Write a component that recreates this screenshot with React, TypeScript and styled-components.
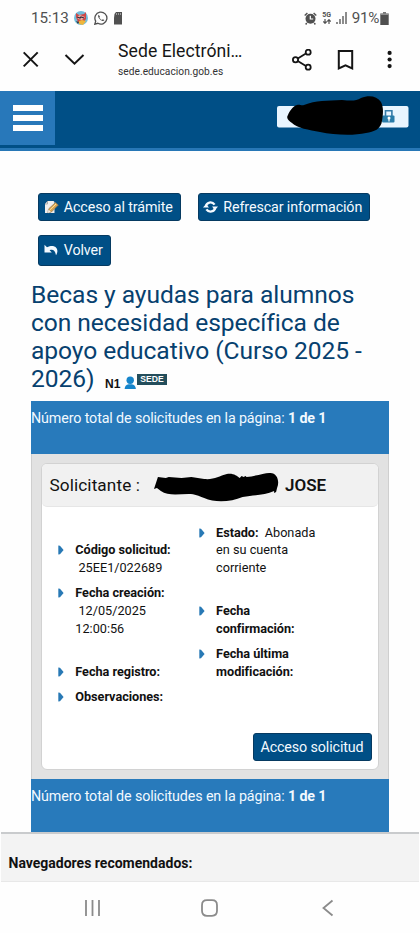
import React from "react";
import styled, { createGlobalStyle } from "styled-components";

const GlobalStyle = createGlobalStyle`
  * { box-sizing: border-box; }
  body { margin: 0; background: #fefefe; font-family: Roboto, sans-serif; color: #111; }
`;

const Screen = styled.div`
  width: 420px;
  height: 933px;
  display: flex;
  flex-direction: column;
  overflow: hidden;
`;

const StatusBar = styled.div`
  height: 36px;
  padding: 0 31px 0 31px;
  display: flex;
  align-items: center;
  justify-content: space-between;
  color: #505050;
  font-size: 15.2px;
`;

const StatusGroup = styled.div<{ $gap: number }>`
  display: flex;
  align-items: center;
  gap: ${(p) => p.$gap}px;
  svg { display: block; }
`;

const StatusText = styled.span<{ $spacing: number }>`
  letter-spacing: ${(p) => p.$spacing}px;
  line-height: 20px;
`;

const BrowserBar = styled.div`
  height: 55px;
  display: flex;
  align-items: flex-start;
  padding-left: 22px;
  svg { display: block; flex: none; }
`;

const BrowserIcons = styled.div<{ $width: number }>`
  width: ${(p) => p.$width}px;
  padding-top: 13px;
  display: flex;
  flex: none;
`;

const PageInfo = styled.div`
  width: 171px;
  flex: none;
  padding-top: 4px;
  white-space: nowrap;
`;

const PageTitle = styled.div`
  font-size: 17.6px;
  line-height: 23px;
  letter-spacing: 0.06px;
  color: #161616;
`;

const PageUrl = styled.div`
  margin-top: 2px;
  font-size: 10.2px;
  line-height: 13px;
  letter-spacing: 0.03px;
  color: #333;
`;

const SiteHeader = styled.header`
  height: 60px;
  flex: none;
  background: #004f86;
  border-bottom: 3px solid #2777b6;
  display: flex;
  justify-content: space-between;
`;

const MenuButton = styled.button`
  width: 54.5px;
  height: 53.5px;
  padding: 13.5px 11.5px 13px 12.5px;
  border: 0;
  background: #2878ba;
  display: flex;
  flex-direction: column;
  justify-content: space-between;
`;

const MenuLine = styled.span`
  height: 6.4px;
  width: 30.5px;
  background: #fff;
`;

const UserBadge = styled.div`
  width: 148px;
  height: 57px;
  svg { display: block; }
`;

const Main = styled.main`
  height: 681px;
  flex: none;
  padding: 42px 31px 0;
`;

const Actions = styled.div`
  display: flex;
  flex-wrap: wrap;
  gap: 13.5px 17px;
  padding-left: 7px;
`;

const Button = styled.button<{ $width: number; $height?: number }>`
  width: ${(p) => p.$width}px;
  height: ${(p) => p.$height ?? 28}px;
  padding: 0;
  border: 1px solid #063a61;
  border-radius: 3px;
  background: #004f86;
  color: #f4faff;
  font: 14.3px/20px Roboto, sans-serif;
  letter-spacing: -0.12px;
  display: flex;
  align-items: center;
  justify-content: center;
  gap: 5px;
  white-space: nowrap;
  svg { flex: none; margin-left: -2px; }
`;

const Heading = styled.h1`
  margin: 15px 0 0;
  height: 120.5px;
  font-size: 24.6px;
  line-height: 28.3px;
  font-weight: 400;
  letter-spacing: -0.06px;
  color: #07416f;
  white-space: nowrap;
`;

const Level = styled.span`
  display: inline-flex;
  align-items: center;
  margin-left: 10.5px;
  height: 16px;
  vertical-align: -1px;
  letter-spacing: 0;
`;

const LevelCode = styled.span`
  font: bold 12px/16px "Liberation Sans", sans-serif;
  color: #111;
  margin-top: 3px;
  width: 19px;
`;

const SedeTag = styled.span`
  width: 30px;
  height: 11px;
  margin-bottom: 6px;
  background: #244e5c;
  color: #fff;
  font: bold 8.6px/11px "Liberation Sans", sans-serif;
  text-align: center;
`;

const CountBar = styled.div`
  height: 52.5px;
  padding-top: 6.5px;
  background: #287abb;
  color: #f2f9ff;
  font-size: 14.3px;
  line-height: 20px;
  letter-spacing: -0.13px;
  white-space: nowrap;
`;

const Panel = styled.section`
  height: 325.5px;
  padding: 9px 9px 9px 8.5px;
  background: #e2e2e2;
  border: solid #cfcfcf;
  border-width: 0 1px;
`;

const Card = styled.article`
  height: 307px;
  background: #fff;
  border: 1px solid #d2d2d2;
  border-radius: 6px;
`;

const CardHeader = styled.header`
  height: 43px;
  padding-left: 8px;
  background: #f1f1f1;
  border-bottom: 1px solid #e6e6e6;
  border-radius: 5px;
  display: flex;
  align-items: center;
  font-size: 17.2px;
  letter-spacing: 0.1px;
  svg { display: block; flex: none; margin: 5px 4px 0 11.5px; }
`;

const ApplicantLabel = styled.span`
  width: 92px;
  white-space: nowrap;
`;

const ApplicantName = styled.strong`
  font-weight: 600;
  font-size: 17px;
  letter-spacing: 0;
`;

const Details = styled.div`
  height: 198px;
  padding: 17.4px 0 0 16.8px;
  display: grid;
  grid-template-columns: 140.8px 150px;
  grid-template-rows: repeat(4, max-content);
  align-items: end;
  row-gap: 7.8px;
`;

const Detail = styled.div`
  display: flex;
  font-size: 12.7px;
  line-height: 17.6px;
  white-space: pre;
  svg { flex: none; margin: 4px 11px 0 0; }
`;

const Term = styled.strong`
  font-weight: 700;
  letter-spacing: -0.04px;
`;

const Value = styled.span`
  letter-spacing: 0;
`;

const CardActions = styled.div`
  height: 62px;
  padding: 28.6px 6.5px 0 0;
  display: flex;
  justify-content: flex-end;
`;

const Footer = styled.footer`
  height: 49.5px;
  flex: none;
  margin: 0 1px;
  padding: 17.5px 7.5px 0;
  background: #f3f3f3;
  border-top: 2px solid #c9cbcd;
  border-bottom: 1px solid #e8e8e8;
  font-size: 14px;
  line-height: 22px;
  font-weight: 700;
`;

const SystemNav = styled.nav`
  flex: 1;
  padding: 15.5px 82px 0 82.5px;
  display: flex;
  justify-content: space-between;
`;

const AppAvatar = () => (
  <svg width="14" height="14" viewBox="0 0 14 14">
    <circle cx="7" cy="7" r="7" fill="#71bddb" />
    <path d="M2 6 2 2l3 2 5-1 2-2 0 7-3 4-5-1z" fill="#cf4848" />
    <path d="m3 6 3-2 5 2-3 3-4-1z" fill="#efb1a6" />
    <path d="m3 6 3 1 1-1 3 1" stroke="#352b3d" strokeWidth="1.3" fill="none" />
    <path d="m5 10 3-1 4 1-3 4-4-1z" fill="#f0b73b" />
    <path d="m2 10 3 1-1 2" fill="#333" />
  </svg>
);

const WhatsApp = () => (
  <svg width="14" height="14" viewBox="0 0 14 14" fill="none" stroke="#505050" strokeWidth="1.3">
    <path d="m.8 13.2.9-3.1a6 6 0 1 1 2.2 2.2z" />
    <path d="M4.7 3.7c-1.4 1.2-.3 3.2 1.4 4.8s3.5 2.2 4.3.6L8.8 8.2l-.9.8C6.7 8.4 6 7.7 5.4 6.5l.6-.8z" fill="#505050" stroke="none" />
  </svg>
);

const StorageCard = () => (
  <svg width="10" height="13" viewBox="0 0 9 13">
    <path d="M2.5 0H8.5V12.5H.5V6L1 2z" fill="#505050" />
    <path d="M3 1v2M5 1v2M7 1v2" stroke="#bbb" strokeWidth=".7" />
  </svg>
);

const Alarm = () => (
  <svg width="13" height="13" viewBox="0 0 13 13" fill="none">
    <circle cx="6.5" cy="6.8" r="5" fill="#505050" />
    <path d="M.7 3.4 3.4.9M12.3 3.4 9.6.9M2.7 11l-1 1.5M10.3 11l1 1.5" stroke="#505050" strokeWidth="1.4" />
    <path d="M6.3 3.8V7h2.9" stroke="#fff" strokeWidth="1.2" />
  </svg>
);

const NetworkLabel = styled.div`
  width: 10px;
  display: flex;
  flex-direction: column;
  align-items: center;
  gap: 1px;
  font: 700 7px/6px Roboto, sans-serif;
`;

const Network = () => (
  <NetworkLabel>
    <span>5G</span>
    <svg width="8" height="5" viewBox="0 0 8 5" stroke="#505050" fill="none" strokeWidth="1.2">
      <path d="M2 0v4M.3 2.5 2 4.3 3.7 2.5M6 5V1M4.3 2.5 6 .7l1.7 1.8" />
    </svg>
  </NetworkLabel>
);

const Signal = () => (
  <svg width="11" height="12" viewBox="0 0 11 12" stroke="#707070" strokeWidth="1.6">
    <path d="M1 10v2M4 7v5M7 4v8M10 0v12" />
  </svg>
);

const Battery = () => (
  <svg width="9" height="13" viewBox="0 0 9 13">
    <path d="M3 0h3v1.5h2.7V13H.3V1.5H3z" fill="#505050" />
    <path d="M3 1h3M.5 2.3h8" stroke="#aaa" strokeWidth=".9" />
  </svg>
);

const CloseAndExpand = () => (
  <svg width="66" height="22" viewBox="0 0 66 22" fill="none" stroke="#151515" strokeWidth="2">
    <path d="m1.7 3.4 14 14M15.7 3.4l-14 14" />
    <path d="m43.5 6 9 8.7 9-8.7" />
  </svg>
);

const BrowserTools = () => (
  <svg width="114" height="24" viewBox="0 0 114 24" fill="none" stroke="#151515" strokeWidth="1.8">
    <path d="m8.8 9.6 8.1-5M8.8 11.9l8.1 5.1" />
    <circle cx="6.5" cy="10.7" r="2.6" />
    <circle cx="19.2" cy="3.2" r="2.5" />
    <circle cx="19.2" cy="18.2" r="2.5" />
    <path d="M49.8 2h13.4v17.4l-6.7-3-6.7 3z" strokeWidth="2" />
    <g fill="#151515" stroke="none">
      <circle cx="100.6" cy="3.9" r="2.1" />
      <circle cx="100.6" cy="10.5" r="2.1" />
      <circle cx="100.6" cy="17.1" r="2.1" />
    </g>
  </svg>
);

const UserScribble = () => (
  <svg width="148" height="57" viewBox="0 0 148 57">
    <rect x="5" y="15" width="131.5" height="21.5" rx="2" fill="#e9f5ff" />
    <path d="M113.5 25v-5.3h6.4V25" fill="none" stroke="#347ba9" strokeWidth="1.6" />
    <rect x="110" y="24.5" width="12.5" height="7" rx="1" fill="#287ba9" />
    <circle cx="117" cy="27" r="1.5" fill="#fff" />
    <path d="M117 27v3.4" stroke="#fff" strokeWidth="1.2" />
    <path d="M16 24c1-3 5-9 9-10 3-1 4 1 7 0 12-5 23-4 38-5 10 1 14 1 19-2 8-3 16-2 20 4 3 6 2 13 1 19-1 8-8 11-16 12-13 3-32 2-46-1-11-2-23-4-28-9-4-3-6-5-4-8z" fill="#000" />
  </svg>
);

const NameScribble = () => (
  <svg width="128" height="32" viewBox="0 0 130 32" preserveAspectRatio="none">
    <path d="m1 18 4-12 8 1 3-1 13 1 10-1 13 2c10 1 15-3 23-5 7-1 10 2 13 4l2-2 2 1 2-1 1 1c10-1 18-4 23-4 8-1 11 8 8 15l-1 4-2 1v-2c-9 4-18 4-32 6-12 5-28 6-39 1-6-2-9-4-16-4-10 0-21 2-28-3l-4-3z" fill="#000" />
  </svg>
);

const EditIcon = () => (
  <svg width="15" height="15" viewBox="0 0 15 15">
    <path d="M3.5 1h6l1 1v11H1V4z" fill="#eee" />
    <path d="M3.5 1v3H1" fill="none" stroke="#999" strokeWidth=".8" />
    <path d="m4.5 9 7-6.5 2.8 2.6-7 7-3.4.8z" fill="#d7a451" stroke="#8c7651" strokeWidth=".7" />
    <path d="m6 9.8 6-5.7" stroke="#ffdf97" />
    <path d="m4.5 9.3-.6 3.6 3-1z" fill="#eee" />
  </svg>
);

const RefreshIcon = () => (
  <svg width="15" height="14" viewBox="0 0 15 14">
    <path d="M3 6.5C3.2 2 9 1 11.6 4.6M12 7.5C11.8 12 6 13 3.4 9.4" fill="none" stroke="#f4faff" strokeWidth="2.3" />
    <path d="M0 7.5h6L3 4zM9 6.5h6l-3 3.8z" fill="#f4faff" />
  </svg>
);

const BackIcon = () => (
  <svg width="15" height="13" viewBox="0 0 15 13">
    <path d="M.5.7v7.8h7.3L5.6 6.2c3-1.2 5.6 0 6.4 5C15.8 5.5 11.5-.7 3 3.2z" fill="#f4faff" />
  </svg>
);

const PersonIcon = () => (
  <svg width="13" height="14" viewBox="0 0 13 14">
    <circle cx="6.2" cy="4.3" r="3.7" fill="#1685cb" />
    <path d="M.6 13q.2-4.3 4-4.8h3.2q3.8.5 4.1 4.8z" fill="#1685cb" />
  </svg>
);

const Bullet = () => (
  <svg width="6" height="10" viewBox="0 0 6 10">
    <path d="M.3.5 2 .7 5.6 5 2 9.2l-1.7.2z" fill="#2879b5" />
  </svg>
);

const NavIcon = ({ d }: { d: string }) => (
  <svg width="20" height="22" viewBox="0 0 20 22" fill="none" stroke="#8b8b8b" strokeWidth="1.8">
    <path d={d} />
  </svg>
);

const Field = ({ term, value = [] }: { term: string; value?: string[] }) => (
  <Detail>
    <Bullet />
    <span>
      <Term>{term}</Term>
      {value.map((line, i) => (
        <React.Fragment key={i}>
          {i > 0 && <br />}
          {line && <Value>{line}</Value>}
        </React.Fragment>
      ))}
    </span>
  </Detail>
);

const RequestCount = () => (
  <CountBar>
    Número total de solicitudes en la página: <strong>1 de 1</strong>
  </CountBar>
);

export default function App() {
  return (
    <Screen>
      <GlobalStyle />
      <StatusBar>
        <StatusGroup $gap={5.5}>
          <StatusText $spacing={0}>15:13</StatusText>
          <AppAvatar />
          <WhatsApp />
          <StorageCard />
        </StatusGroup>
        <StatusGroup $gap={4.5}>
          <Alarm />
          <Network />
          <Signal />
          <StatusGroup $gap={1}>
            <StatusText $spacing={-0.3}>91%</StatusText>
            <Battery />
          </StatusGroup>
        </StatusGroup>
      </StatusBar>
      <BrowserBar>
        <BrowserIcons $width={96}><CloseAndExpand /></BrowserIcons>
        <PageInfo>
          <PageTitle>Sede Electróni…</PageTitle>
          <PageUrl>sede.educacion.gob.es</PageUrl>
        </PageInfo>
        <BrowserIcons $width={114}><BrowserTools /></BrowserIcons>
      </BrowserBar>
      <SiteHeader>
        <MenuButton aria-label="Menú"><MenuLine /><MenuLine /><MenuLine /></MenuButton>
        <UserBadge><UserScribble /></UserBadge>
      </SiteHeader>
      <Main>
        <Actions>
          <Button $width={142.5}><EditIcon />Acceso al trámite</Button>
          <Button $width={172.5}><RefreshIcon />Refrescar información</Button>
          <Button $width={72.5} $height={31}><BackIcon />Volver</Button>
        </Actions>
        <Heading>
          Becas y ayudas para alumnos<br />
          con necesidad específica de<br />
          apoyo educativo (Curso 2025 -<br />
          2026)
          <Level><LevelCode>N1</LevelCode><PersonIcon /><SedeTag>SEDE</SedeTag></Level>
        </Heading>
        <RequestCount />
        <Panel>
          <Card>
            <CardHeader>
              <ApplicantLabel>Solicitante :</ApplicantLabel>
              <NameScribble />
              <ApplicantName>JOSE</ApplicantName>
            </CardHeader>
            <Details>
              <Field term="Código solicitud:" value={["", " 25EE1/022689"]} />
              <Field term="Estado:" value={["  Abonada", "en su cuenta", "corriente"]} />
              <Field term="Fecha creación:" value={["", " 12/05/2025", "12:00:56"]} />
              <Field term={"Fecha\nconfirmación:"} />
              <Field term="Fecha registro:" />
              <Field term={"Fecha última\nmodificación:"} />
              <Field term="Observaciones:" />
            </Details>
            <CardActions>
              <Button $width={119}>Acceso solicitud</Button>
            </CardActions>
          </Card>
        </Panel>
        <RequestCount />
      </Main>
      <Footer>Navegadores recomendados:</Footer>
      <SystemNav>
        <NavIcon d="M3 3v16M9.5 3v16M16 3v16" />
        <NavIcon d="M7 3.2h5q5 0 5 5v5.6q0 5-5 5H7q-5 0-5-5V8.2q0-5 5-5z" />
        <NavIcon d="m14.5 3.5-9 7.5 9 7.5" />
      </SystemNav>
    </Screen>
  );
}
